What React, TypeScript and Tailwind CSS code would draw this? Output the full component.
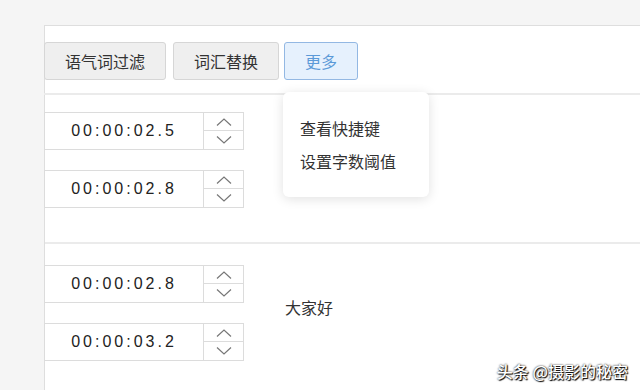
const CJK = "font-['Noto_Sans_CJK_SC','Noto_Sans',sans-serif]";

type Row = { times: [string, string]; text?: string };

const rows: Row[] = [
  { times: ['00:00:02.5', '00:00:02.8'] },
  { times: ['00:00:02.8', '00:00:03.2'], text: '大家好' },
];

function Chevron({ up }: { up?: boolean }) {
  return (
    <svg width="16" height="8" viewBox="0 0 16 8" fill="none" stroke="#777" strokeWidth="1.2">
      <path d={up ? 'M1 7.5 L8 1 L15 7.5' : 'M1 0.5 L8 7 L15 0.5'} />
    </svg>
  );
}

function TimeInput({ value }: { value: string }) {
  return (
    <div className="flex h-[38px] -ml-px">
      <div className="w-[160px] h-full border border-[#dcdcdc] flex items-center justify-center font-['Liberation_Sans',Arial,sans-serif] text-[16px] tracking-[3px] text-[#222]">
        {value}
      </div>
      <div className="w-[40px] h-full border border-l-0 border-[#dcdcdc] flex flex-col">
        <div className="h-1/2 border-b border-[#dcdcdc] flex items-center justify-center">
          <Chevron up />
        </div>
        <div className="h-1/2 flex items-center justify-center">
          <Chevron />
        </div>
      </div>
    </div>
  );
}

export default function App() {
  return (
    <div className="relative w-[640px] h-[390px] overflow-hidden bg-[#f5f5f5] pt-[25px] pl-[44px]">
      <div className="h-full bg-white border-t border-l border-[#dedede]">
        <div className={`flex items-start pt-[16px] pb-[13px] -ml-px border-b-2 border-[#ebebeb] ${CJK}`}>
          <button className="w-[122px] h-[38px] rounded-[3px] bg-[#efefef] border border-[#d6d6d6] text-[16px] text-[#333]">
            语气词过滤
          </button>
          <button className="ml-[7px] w-[106px] h-[38px] rounded-[3px] bg-[#efefef] border border-[#d6d6d6] text-[16px] text-[#333]">
            词汇替换
          </button>
          <button className="ml-[5px] w-[74px] h-[38px] rounded-[3px] bg-[#e6f1fd] border border-[#93b8e3] text-[16px] text-[#5b9ad8]">
            更多
          </button>
        </div>

        <div className="flex flex-col">
          {rows.map((row, i) => (
            <div
              key={i}
              className={
                i === 0
                  ? 'flex pt-[17px] pb-[34px] border-b-2 border-[#ebebeb]'
                  : 'flex pt-[21px]'
              }
            >
              <div className="flex flex-col gap-[20px]">
                <TimeInput value={row.times[0]} />
                <TimeInput value={row.times[1]} />
              </div>
              {row.text && (
                <div className={`ml-[41px] mt-[30px] text-[16px] text-[#333] ${CJK}`}>{row.text}</div>
              )}
            </div>
          ))}
        </div>
      </div>

      <div className={`absolute left-[283px] top-[92px] w-[146px] h-[105px] rounded-[6px] bg-white shadow-[0_2px_12px_rgba(0,0,0,0.12)] pt-[20px] pl-[17px] ${CJK}`}>
        <div className="h-[33px] leading-[33px] text-[16px] text-[#333]">查看快捷键</div>
        <div className="h-[33px] leading-[33px] text-[16px] text-[#333]">设置字数阈值</div>
      </div>

      <div
        className={`absolute right-[12px] bottom-[7px] text-[16px] font-medium text-white [text-shadow:0_0_2px_#000,1px_1px_1px_#000] ${CJK}`}
      >
        头条 @摄影的秘密
      </div>
    </div>
  );
}
